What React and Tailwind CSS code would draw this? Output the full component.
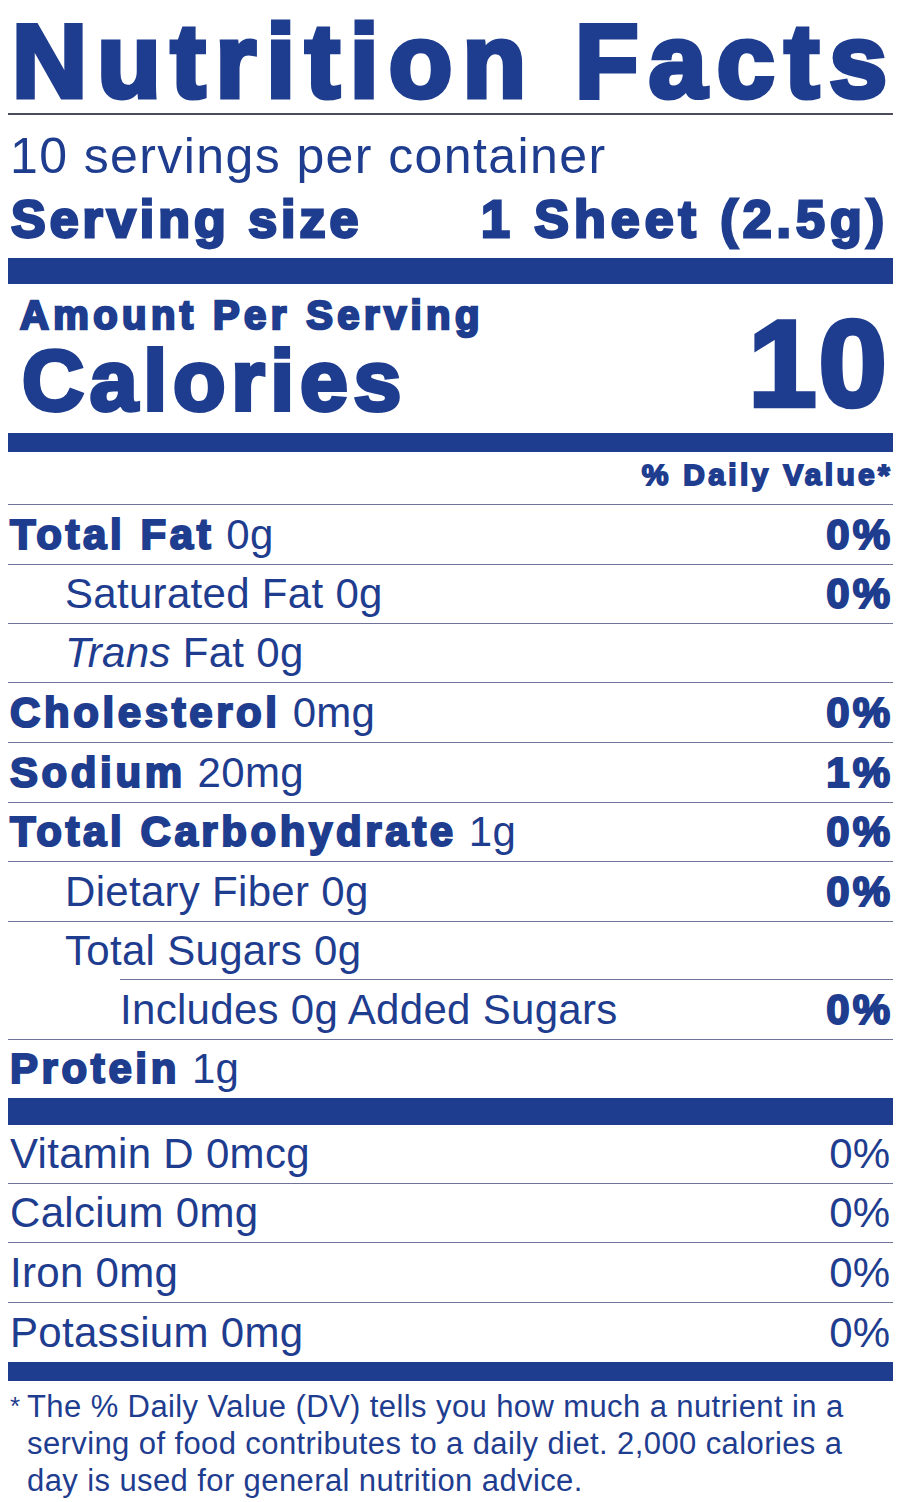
const nutrients = [
  { label: 'Total Fat', amount: '0g', dv: '0%', bold: true, indent: 'pl-[2px]', h: 'h-[60px]' },
  { label: 'Saturated Fat', amount: '0g', dv: '0%', indent: 'pl-[57px]', h: 'h-[59px]' },
  { label: 'Trans', italic: true, amount: 'Fat 0g', indent: 'pl-[57px]', h: 'h-[59px]' },
  { label: 'Cholesterol', amount: '0mg', dv: '0%', bold: true, indent: 'pl-[2px]', h: 'h-[60px]' },
  { label: 'Sodium', amount: '20mg', dv: '1%', bold: true, indent: 'pl-[2px]', h: 'h-[60px]' },
  { label: 'Total Carbohydrate', amount: '1g', dv: '0%', bold: true, indent: 'pl-[2px]', h: 'h-[59px]' },
  { label: 'Dietary Fiber', amount: '0g', dv: '0%', indent: 'pl-[57px]', h: 'h-[60px]' },
  { label: 'Total Sugars', amount: '0g', indent: 'pl-[57px]', h: 'h-[58px]', shortLine: true },
  { label: 'Includes 0g Added Sugars', amount: '', dv: '0%', indent: 'pl-[112px]', h: 'h-[60px]' },
  { label: 'Protein', amount: '1g', bold: true, indent: 'pl-[2px]', h: 'h-[58px]', noLine: true },
];

const vitamins = [
  { label: 'Vitamin D 0mcg', dv: '0%', h: 'h-[59px]' },
  { label: 'Calcium 0mg', dv: '0%', h: 'h-[59px]' },
  { label: 'Iron 0mg', dv: '0%', h: 'h-[60px]' },
  { label: 'Potassium 0mg', dv: '0%', h: 'h-[59px]', noLine: true },
];

function NutrientRow({ row }) {
  const line = row.noLine || row.shortLine ? '' : 'border-b border-[#6f7399]';
  return (
    <div className={`relative flex items-center justify-between ${row.h} ${line}`}>
      <div className={`${row.indent} text-[42px] leading-none tracking-[0.3px] whitespace-nowrap`}>
        {row.bold ? (
          <span className="font-bold tracking-[3.6px] [-webkit-text-stroke:2.1px_#1f3d8f]">{row.label}</span>
        ) : row.italic ? (
          <span className="italic">{row.label}</span>
        ) : (
          <span>{row.label}</span>
        )}
        {row.amount && <span> {row.amount}</span>}
      </div>
      {row.dv && (
        <div className="text-[42px] leading-none font-bold tracking-[3px] [-webkit-text-stroke:2px_#1f3d8f]">
          {row.dv}
        </div>
      )}
      {row.shortLine && (
        <div className="absolute bottom-0 left-[112px] right-0 border-b border-[#6f7399]" />
      )}
    </div>
  );
}

export default function App() {
  return (
    <div className="min-h-[1502px] w-[900px] bg-white text-[#1f3d8f] [font-family:'Liberation_Sans',Arial,sans-serif]">
      <div className="ml-[8px] w-[885px]">
        {/* title */}
        <div className="h-[115px] border-b-2 border-[#4b4d5c] pt-[9px]">
          <div className="pl-[4px] text-[104px] leading-none font-bold tracking-[10.1px] whitespace-nowrap [-webkit-text-stroke:5px_#1f3d8f]">
            Nutrition Facts
          </div>
        </div>

        {/* servings */}
        <div className="mt-[16px] pl-[2px] text-[50px] leading-none tracking-[1.4px] whitespace-nowrap">
          10 servings per container
        </div>
        <div className="mt-[12px] flex justify-between text-[52px] leading-none font-bold whitespace-nowrap [-webkit-text-stroke:2.8px_#1f3d8f]">
          <span className="pl-[3px] tracking-[4px]">Serving size</span>
          <span className="pr-[4px] tracking-[5px]">1 Sheet (2.5g)</span>
        </div>

        <div className="mt-[13px] h-[26px] bg-[#1f3d8f]" />

        {/* calories */}
        <div className="flex h-[149px] justify-between">
          <div className="pl-[12px]">
            <div className="pt-[11px] text-[40px] leading-none font-bold tracking-[4.4px] whitespace-nowrap [-webkit-text-stroke:2.5px_#1f3d8f]">
              Amount Per Serving
            </div>
            <div className="mt-[2px] pl-[2px] text-[86px] leading-none font-bold tracking-[5.7px] whitespace-nowrap [-webkit-text-stroke:4px_#1f3d8f]">
              Calories
            </div>
          </div>
          <div className="pt-[18px] pr-[4px] text-[123px] leading-none font-bold tracking-[2px] [-webkit-text-stroke:4.5px_#1f3d8f]">
            10
          </div>
        </div>

        <div className="h-[19px] bg-[#1f3d8f]" />

        <div className="flex h-[53px] justify-end border-b border-[#6f7399] pt-[8px]">
          <span className="text-[30px] leading-none font-bold tracking-[3.3px] whitespace-nowrap [-webkit-text-stroke:1.8px_#1f3d8f]">
            % Daily Value*
          </span>
        </div>

        {nutrients.map((row) => (
          <NutrientRow key={row.label} row={row} />
        ))}

        <div className="h-[27px] bg-[#1f3d8f]" />

        {vitamins.map((v) => (
          <div
            key={v.label}
            className={`flex items-center justify-between ${v.h} ${v.noLine ? '' : 'border-b border-[#6f7399]'}`}
          >
            <span className="pl-[2px] text-[42px] leading-none tracking-[0.3px] whitespace-nowrap">{v.label}</span>
            <span className="pr-[3px] text-[42px] leading-none">{v.dv}</span>
          </div>
        ))}

        <div className="h-[19px] bg-[#1f3d8f]" />

        {/* footnote */}
        <div className="mt-[7px] flex text-[31px] leading-[37px] tracking-[0.4px]">
          <span className="w-[19px] shrink-0 pl-[2px] text-[26px]">*</span>
          <p className="whitespace-nowrap">
            The % Daily Value (DV) tells you how much a nutrient in a<br />
            serving of food contributes to a daily diet. 2,000 calories a<br />
            day is used for general nutrition advice.
          </p>
        </div>
      </div>
    </div>
  );
}
